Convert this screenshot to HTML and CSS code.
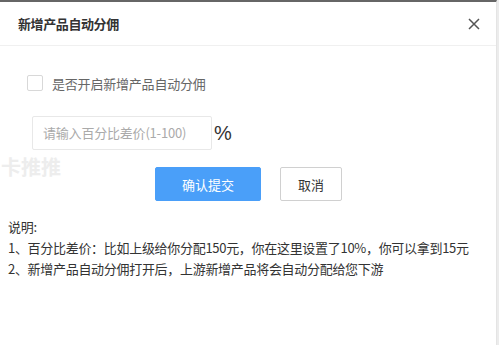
FILE: index.html
```html
<!DOCTYPE html>
<html lang="zh">
<head>
<meta charset="utf-8">
<link rel="stylesheet" href="styles.css">
</head>
<body>
<div class="modal">
  <div class="header">
    <span class="title">新增产品自动分佣</span>
    <svg class="close" width="12" height="12" viewBox="0 0 12 12"><path d="M1 1 L11 11 M11 1 L1 11" stroke="#555" stroke-width="1.5" fill="none"/></svg>
  </div>
  <div class="body">
    <label class="check-row"><span class="checkbox"></span><span class="check-label">是否开启新增产品自动分佣</span></label>
    <div class="input-row"><div class="input">请输入百分比差价(1-100)</div><span class="pct">%</span></div>
    <div class="watermark">卡推推</div>
    <div class="btn-row"><button class="btn primary">确认提交</button><button class="btn cancel">取消</button></div>
    <div class="notes">
      <p>说明:</p>
      <p>1、百分比差价：比如上级给你分配150元，你在这里设置了10%，你可以拿到15元</p>
      <p>2、新增产品自动分佣打开后，上游新增产品将会自动分配给您下游</p>
    </div>
  </div>
</div>
</body>
</html>
```
FILE: styles.css
```css
* { box-sizing: border-box; margin: 0; padding: 0; }
html, body { width: 499px; height: 345px; background: #ececec; overflow: hidden; }
body { font-family: "Noto Sans CJK SC", "Liberation Sans", sans-serif; color: #333; }
.modal { width: 497px; height: 345px; background: #fff; border-top: 2px solid #666; border-right: 1px solid #e4e4e4; }
.header { height: 44px; display: flex; align-items: center; justify-content: space-between; padding: 0 16px 0 18px; border-bottom: 1px solid #f0f0f0; }
.title { font-size: 13px; font-weight: bold; color: #333; letter-spacing: -0.4px; }
.close { display: block; }
.body { position: relative; padding-top: 29px; }
.check-row { display: flex; align-items: center; margin-left: 27px; height: 16px; }
.checkbox { width: 16px; height: 16px; border: 1px solid #d8d8d8; border-radius: 2px; background: #fff; }
.check-label { margin-left: 9px; font-size: 13px; color: #666; letter-spacing: -0.2px; }
.input-row { display: flex; align-items: center; margin: 25px 0 0 32px; }
.input { width: 180px; height: 34px; border: 1px solid #e8e8e8; border-radius: 2px; padding-left: 10px; font-size: 13px; line-height: 32px; color: #aaa; letter-spacing: -0.2px; }
.pct { margin-left: 2px; font-size: 20px; color: #333; font-family: "Liberation Sans", sans-serif; }
.watermark { position: absolute; left: 1px; top: 106px; font-size: 20px; font-weight: bold; color: #ededed; }
.btn-row { display: flex; margin: 17px 0 0 155px; gap: 19px; }
.btn { height: 34px; border: 1px solid #d0d0d0; border-radius: 2px; background: #fff; font-family: inherit; font-size: 13px; color: #333; }
.btn.primary { width: 106px; background: #4a9ff9; border-color: #4a9ff9; color: #fff; }
.btn.cancel { width: 62px; }
.notes { margin: 16px 0 0 8px; font-size: 13px; line-height: 20px; color: #333; letter-spacing: -0.3px; }
.notes p + p { margin-top: 1px; }
```
